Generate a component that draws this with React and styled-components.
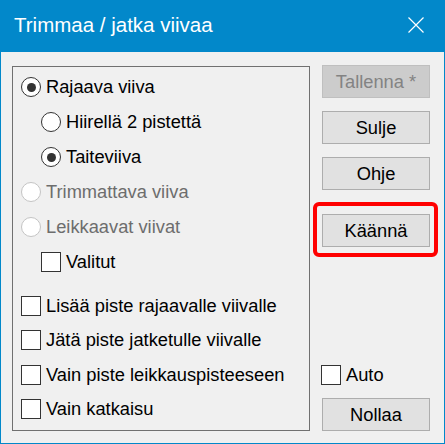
import React from 'react';
import styled, { createGlobalStyle } from 'styled-components';

const GlobalStyle = createGlobalStyle`
  html, body {
    margin: 0;
    padding: 0;
    background: #f0f0f0;
  }
  * {
    box-sizing: border-box;
  }
`;

const Window = styled.div`
  width: 445px;
  height: 444px;
  display: flex;
  flex-direction: column;
  background: #f0f0f0;
  border: 1px solid #0288ca;
  border-top: none;
  font-family: 'Liberation Sans', Arial, sans-serif;
  color: #000;
`;

const TitleBar = styled.div`
  height: 52px;
  margin: 0 -1px;
  padding: 0 21px 2px 14px;
  display: flex;
  align-items: center;
  justify-content: space-between;
  background: #0288ca;
  color: #fff;
  font-size: 20.5px;
`;

const CloseIcon = styled.svg`
  width: 16px;
  height: 16px;
  display: block;
`;

const Body = styled.div`
  flex: 1;
  display: flex;
  padding: 14px 13px 12px 11px;
`;

const GroupBox = styled.div`
  width: 298px;
  border: 1px solid #707070;
  padding: 2.5px 0 0 8px;
  display: flex;
  flex-direction: column;
`;

const Section = styled.div`
  display: flex;
  flex-direction: column;
  margin-top: ${(p) => p.gap || 0}px;
`;

const Row = styled.div`
  height: ${(p) => (p.tight ? 34.3 : 35)}px;
  display: flex;
  align-items: center;
  gap: 5px;
  padding-left: ${(p) => (p.level || 0) * 20}px;
  font-size: 18.3px;
  color: ${(p) => (p.disabled ? '#6d6d6d' : '#000')};
  white-space: nowrap;
`;

const Radio = styled.span`
  width: 20px;
  height: 20px;
  border-radius: 50%;
  border: 1.6px solid ${(p) => (p.disabled ? '#c4c4c4' : '#333')};
  background: #fff;
  display: flex;
  align-items: center;
  justify-content: center;
  flex: none;

  &::after {
    content: '';
    width: 9px;
    height: 9px;
    border-radius: 50%;
    background: #333;
    display: ${(p) => (p.checked ? 'block' : 'none')};
  }
`;

const Check = styled.span`
  width: 20px;
  height: 20px;
  border: 1px solid #333;
  background: #fff;
  flex: none;
`;

const Side = styled.div`
  width: 108px;
  margin-left: 12px;
  margin-top: -1px;
  display: flex;
  flex-direction: column;
`;

const Button = styled.div`
  height: 33px;
  display: flex;
  align-items: center;
  justify-content: center;
  background: ${(p) => (p.disabled ? '#cccccc' : '#e1e1e1')};
  border: 1px solid ${(p) => (p.disabled ? '#bfbfbf' : '#adadad')};
  color: ${(p) => (p.disabled ? '#838383' : '#000')};
  font-size: 18.3px;
  margin-top: ${(p) => p.top || 0}px;
`;

const Highlight = styled.div`
  margin: 12px -8px 0 -9px;
  padding: 8px 4px 6px 5px;
  border: 4px solid #ff0000;
  border-radius: 6px;
`;

const AutoRow = styled.div`
  margin-top: auto;
  margin-left: -1px;
  display: flex;
  align-items: center;
  gap: 5px;
  font-size: 18.3px;
`;

const App = () => {
  return (
    <>
      <GlobalStyle />
      <Window>
        <TitleBar>
          <span>Trimmaa / jatka viivaa</span>
          <CloseIcon viewBox="0 0 16 16">
            <path d="M0.5 0.5 L15.5 15.5 M15.5 0.5 L0.5 15.5" stroke="#fff" strokeWidth="1.2" fill="none" />
          </CloseIcon>
        </TitleBar>
        <Body>
          <GroupBox>
            <Section>
              <Row>
                <Radio checked />
                Rajaava viiva
              </Row>
              <Row level={1}>
                <Radio />
                Hiirellä 2 pistettä
              </Row>
              <Row level={1}>
                <Radio checked />
                Taiteviiva
              </Row>
              <Row disabled>
                <Radio disabled />
                Trimmattava viiva
              </Row>
              <Row disabled>
                <Radio disabled />
                Leikkaavat viivat
              </Row>
              <Row level={1}>
                <Check />
                Valitut
              </Row>
            </Section>
            <Section gap={9.3}>
              <Row tight>
                <Check />
                Lisää piste rajaavalle viivalle
              </Row>
              <Row tight>
                <Check />
                Jätä piste jatketulle viivalle
              </Row>
              <Row tight>
                <Check />
                Vain piste leikkauspisteeseen
              </Row>
              <Row tight>
                <Check />
                Vain katkaisu
              </Row>
            </Section>
          </GroupBox>
          <Side>
            <Button disabled>Tallenna *</Button>
            <Button top={13}>Sulje</Button>
            <Button top={13}>Ohje</Button>
            <Highlight>
              <Button>Käännä</Button>
            </Highlight>
            <AutoRow>
              <Check />
              Auto
            </AutoRow>
            <Button top={12}>Nollaa</Button>
          </Side>
        </Body>
      </Window>
    </>
  );
};

export default App;
